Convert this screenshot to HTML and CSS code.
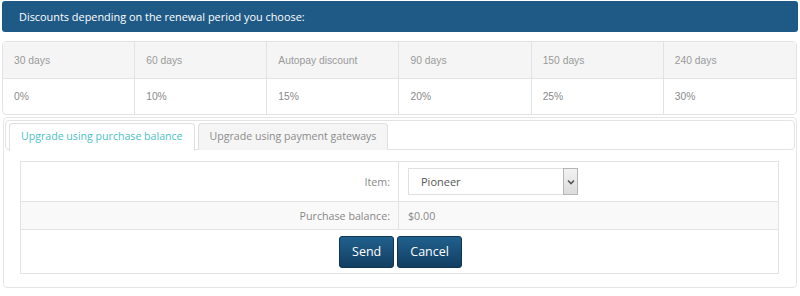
FILE: index.html
```html
<!DOCTYPE html>
<html>
<head>
<meta charset="utf-8">
<link rel="stylesheet" href="styles.css">
</head>
<body>
<div class="page">
  <div class="banner">Discounts depending on the renewal period you choose:</div>
  <table class="discounts">
    <tr class="head">
      <td>30 days</td><td>60 days</td><td>Autopay discount</td><td>90 days</td><td>150 days</td><td>240 days</td>
    </tr>
    <tr>
      <td>0%</td><td>10%</td><td>15%</td><td>20%</td><td>25%</td><td>30%</td>
    </tr>
  </table>
  <div class="panel">
    <div class="tabnav">
      <div class="tab active">Upgrade using purchase balance</div>
      <div class="tab">Upgrade using payment gateways</div>
    </div>
    <table class="form">
      <tr class="row-item">
        <td class="label">Item:</td>
        <td class="value">
          <div class="select">
            <span class="select-text">Pioneer</span>
            <span class="select-arrow"><svg width="8" height="6" viewBox="0 0 8 6"><path d="M1 1.5 L4 4.5 L7 1.5" fill="none" stroke="#555" stroke-width="1.6"/></svg></span>
          </div>
        </td>
      </tr>
      <tr class="row-balance">
        <td class="label">Purchase balance:</td>
        <td class="value">$0.00</td>
      </tr>
      <tr class="row-actions">
        <td colspan="2">
          <div class="actions">
            <button class="btn">Send</button>
            <button class="btn">Cancel</button>
          </div>
        </td>
      </tr>
    </table>
  </div>
</div>
</body>
</html>
```
FILE: styles.css
```css
* { box-sizing: border-box; }
html, body { margin: 0; padding: 0; background: #fff; }
.page { padding: 1px 2px 0 2px; width: 800px; }
.banner {
  height: 31px;
  background: #1f5a86;
  color: #fff;
  font-family: "Open Sans", sans-serif;
  font-size: 10.9px;
  line-height: 31px;
  padding-left: 17px;
  border-radius: 3px;
}
.discounts {
  margin-top: 9px;
  width: 795px;
  border-collapse: separate;
  border-spacing: 0;
  border: 1px solid #e3e3e3;
  border-radius: 4px;
  font-family: "Liberation Sans", Arial, sans-serif;
  font-size: 10.3px;
  color: #9a9a9a;
  table-layout: fixed;
}
.discounts td {
  padding: 0 11px;
  border-right: 1px solid #e3e3e3;
}
.discounts td:last-child { border-right: 0; }
.discounts .head td {
  height: 37px;
  background: #f5f5f5;
  border-bottom: 1px solid #e3e3e3;
}
.discounts tr:not(.head) td { height: 35px; color: #8a8a8a; }
.panel {
  margin: 2px 0 0 1px;
  width: 794px;
  border: 1px solid #e6e6e6;
  border-radius: 4px;
  padding: 2px 1px 13px 1px;
}
.tabnav {
  display: flex;
  gap: 3px;
  border: 1px solid #e3e3e3;
  border-radius: 4px;
  padding: 2px 0 0 3px;
  height: 30px;
  font-family: "Open Sans", sans-serif;
  font-size: 10.6px;
}
.tab {
  height: 27px;
  padding: 0 11px;
  line-height: 25px;
  border: 1px solid #e0e0e0;
  border-bottom: 0;
  border-radius: 4px 4px 0 0;
  background: #f5f5f5;
  color: #8c8c8c;
}
.tab.active {
  background: #fff;
  color: #4dbfc6;
  height: 28px;
}
.form {
  margin: 11px 0 0 15px;
  width: 759px;
  border-collapse: collapse;
  font-family: "Open Sans", sans-serif;
  font-size: 10.7px;
  color: #888;
}
.form td { border: 1px solid #e3e3e3; }
.form .label { width: 378px; text-align: right; padding-right: 8px; }
.form .value { padding-left: 9px; }
.row-item td { height: 40px; }
.row-balance td { height: 28px; background: #f9f9f9; }
.row-actions td { height: 44px; }
.select {
  display: flex;
  width: 170px;
  height: 27px;
  border: 1px solid #e0e0e0;
  align-items: stretch;
  color: #555;
}
.select-text { flex: 1; padding-left: 12px; line-height: 25px; font-size: 11px; }
.select-arrow {
  width: 15px;
  background: linear-gradient(#f2f2f2, #dcdcdc);
  border: 1px solid #b5b5b5;
  display: flex;
  align-items: center;
  justify-content: center;
  margin: -1px -1px -1px 0;
}
.actions { display: flex; justify-content: center; gap: 3px; padding-left: 2px; }
.btn {
  height: 32px;
  padding: 0 12px;
  background: linear-gradient(#21608d, #123f62);
  border: 1px solid #0f3553;
  border-radius: 3px;
  color: #fff;
  font-family: "Open Sans", sans-serif;
  font-size: 12.5px;
}
```
